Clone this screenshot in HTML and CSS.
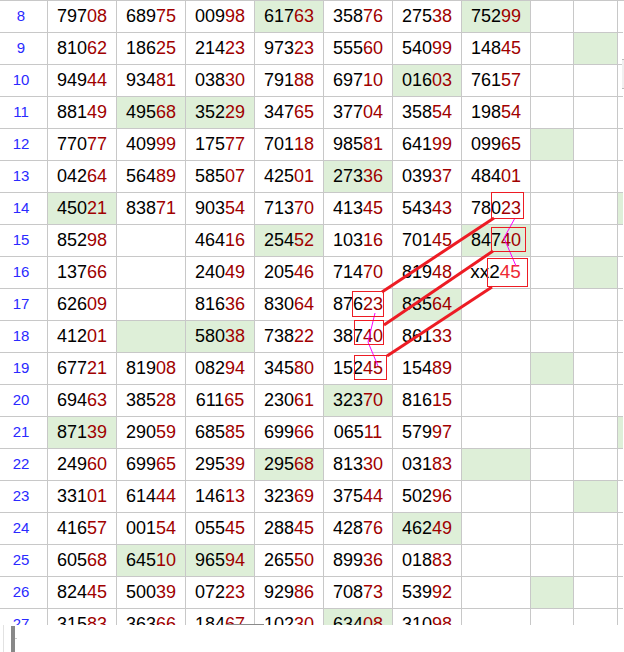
FILE: index.html
```html
<!DOCTYPE html>
<html lang="en">
<head>
<meta charset="utf-8">
<title>Number sheet</title>
<link rel="stylesheet" href="styles.css">
</head>
<body>
<div class="page">
<main class="sheet">
<div class="row"><div class="num">8</div><div class="cell">797<b>08</b></div><div class="cell">689<b>75</b></div><div class="cell">009<b>98</b></div><div class="cell g">617<b>63</b></div><div class="cell">358<b>76</b></div><div class="cell">275<b>38</b></div><div class="cell g">752<b>99</b></div><div class="cell"></div><div class="cell"></div><div class="end"></div></div>
<div class="row"><div class="num">9</div><div class="cell">810<b>62</b></div><div class="cell">186<b>25</b></div><div class="cell">214<b>23</b></div><div class="cell">973<b>23</b></div><div class="cell">555<b>60</b></div><div class="cell">540<b>99</b></div><div class="cell">148<b>45</b></div><div class="cell"></div><div class="cell g"></div><div class="end"></div></div>
<div class="row"><div class="num">10</div><div class="cell">949<b>44</b></div><div class="cell">934<b>81</b></div><div class="cell">038<b>30</b></div><div class="cell">791<b>88</b></div><div class="cell">697<b>10</b></div><div class="cell g">016<b>03</b></div><div class="cell">761<b>57</b></div><div class="cell"></div><div class="cell"></div><div class="end"></div></div>
<div class="row"><div class="num">11</div><div class="cell">881<b>49</b></div><div class="cell g">495<b>68</b></div><div class="cell g">352<b>29</b></div><div class="cell">347<b>65</b></div><div class="cell">377<b>04</b></div><div class="cell">358<b>54</b></div><div class="cell">198<b>54</b></div><div class="cell"></div><div class="cell"></div><div class="end"></div></div>
<div class="row"><div class="num">12</div><div class="cell">770<b>77</b></div><div class="cell">409<b>99</b></div><div class="cell">175<b>77</b></div><div class="cell">701<b>18</b></div><div class="cell">985<b>81</b></div><div class="cell">641<b>99</b></div><div class="cell">099<b>65</b></div><div class="cell g"></div><div class="cell"></div><div class="end"></div></div>
<div class="row"><div class="num">13</div><div class="cell">042<b>64</b></div><div class="cell">564<b>89</b></div><div class="cell">585<b>07</b></div><div class="cell">425<b>01</b></div><div class="cell g">273<b>36</b></div><div class="cell">039<b>37</b></div><div class="cell">484<b>01</b></div><div class="cell"></div><div class="cell"></div><div class="end"></div></div>
<div class="row"><div class="num">14</div><div class="cell g">450<b>21</b></div><div class="cell">838<b>71</b></div><div class="cell">903<b>54</b></div><div class="cell">713<b>70</b></div><div class="cell">413<b>45</b></div><div class="cell">543<b>43</b></div><div class="cell">780<b>23</b></div><div class="cell"></div><div class="cell"></div><div class="end g"></div></div>
<div class="row"><div class="num">15</div><div class="cell">852<b>98</b></div><div class="cell"></div><div class="cell">464<b>16</b></div><div class="cell g">254<b>52</b></div><div class="cell">103<b>16</b></div><div class="cell">701<b>45</b></div><div class="cell g">847<b>40</b></div><div class="cell"></div><div class="cell"></div><div class="end"></div></div>
<div class="row"><div class="num">16</div><div class="cell">137<b>66</b></div><div class="cell"></div><div class="cell">240<b>49</b></div><div class="cell">205<b>46</b></div><div class="cell">714<b>70</b></div><div class="cell">819<b>48</b></div><div class="cell big">xx2<b>45</b></div><div class="cell"></div><div class="cell g"></div><div class="end"></div></div>
<div class="row"><div class="num">17</div><div class="cell">626<b>09</b></div><div class="cell"></div><div class="cell">816<b>36</b></div><div class="cell">830<b>64</b></div><div class="cell">876<b>23</b></div><div class="cell g">835<b>64</b></div><div class="cell"></div><div class="cell"></div><div class="cell"></div><div class="end"></div></div>
<div class="row"><div class="num">18</div><div class="cell">412<b>01</b></div><div class="cell g"></div><div class="cell g">580<b>38</b></div><div class="cell">738<b>22</b></div><div class="cell">387<b>40</b></div><div class="cell">861<b>33</b></div><div class="cell"></div><div class="cell"></div><div class="cell"></div><div class="end"></div></div>
<div class="row"><div class="num">19</div><div class="cell">677<b>21</b></div><div class="cell">819<b>08</b></div><div class="cell">082<b>94</b></div><div class="cell">345<b>80</b></div><div class="cell">152<b>45</b></div><div class="cell">154<b>89</b></div><div class="cell"></div><div class="cell g"></div><div class="cell"></div><div class="end"></div></div>
<div class="row"><div class="num">20</div><div class="cell">694<b>63</b></div><div class="cell">385<b>28</b></div><div class="cell">611<b>65</b></div><div class="cell">230<b>61</b></div><div class="cell g">323<b>70</b></div><div class="cell">816<b>15</b></div><div class="cell"></div><div class="cell"></div><div class="cell"></div><div class="end"></div></div>
<div class="row"><div class="num">21</div><div class="cell g">871<b>39</b></div><div class="cell">290<b>59</b></div><div class="cell">685<b>85</b></div><div class="cell">699<b>66</b></div><div class="cell">065<b>11</b></div><div class="cell">579<b>97</b></div><div class="cell"></div><div class="cell"></div><div class="cell"></div><div class="end g"></div></div>
<div class="row"><div class="num">22</div><div class="cell">249<b>60</b></div><div class="cell">699<b>65</b></div><div class="cell">295<b>39</b></div><div class="cell g">295<b>68</b></div><div class="cell">813<b>30</b></div><div class="cell">031<b>83</b></div><div class="cell g"></div><div class="cell"></div><div class="cell"></div><div class="end"></div></div>
<div class="row"><div class="num">23</div><div class="cell">331<b>01</b></div><div class="cell">614<b>44</b></div><div class="cell">146<b>13</b></div><div class="cell">323<b>69</b></div><div class="cell">375<b>44</b></div><div class="cell">502<b>96</b></div><div class="cell"></div><div class="cell"></div><div class="cell g"></div><div class="end"></div></div>
<div class="row"><div class="num">24</div><div class="cell">416<b>57</b></div><div class="cell">001<b>54</b></div><div class="cell">055<b>45</b></div><div class="cell">288<b>45</b></div><div class="cell">428<b>76</b></div><div class="cell g">462<b>49</b></div><div class="cell"></div><div class="cell"></div><div class="cell"></div><div class="end"></div></div>
<div class="row"><div class="num">25</div><div class="cell">605<b>68</b></div><div class="cell g">645<b>10</b></div><div class="cell g">965<b>94</b></div><div class="cell">265<b>50</b></div><div class="cell">899<b>36</b></div><div class="cell">018<b>83</b></div><div class="cell"></div><div class="cell"></div><div class="cell"></div><div class="end"></div></div>
<div class="row"><div class="num">26</div><div class="cell">824<b>45</b></div><div class="cell">500<b>39</b></div><div class="cell">072<b>23</b></div><div class="cell">929<b>86</b></div><div class="cell">708<b>73</b></div><div class="cell">539<b>92</b></div><div class="cell"></div><div class="cell g"></div><div class="cell"></div><div class="end"></div></div>
<div class="row"><div class="num">27</div><div class="cell">315<b>83</b></div><div class="cell">363<b>66</b></div><div class="cell">184<b>67</b></div><div class="cell">102<b>30</b></div><div class="cell g">634<b>08</b></div><div class="cell">310<b>98</b></div><div class="cell"></div><div class="cell"></div><div class="cell"></div><div class="end"></div></div>
</main>
<footer class="bar">
<span class="faint"></span>
<span class="grip"></span>
<span class="tick"></span>
<span class="tab"></span>
</footer>
<span class="scroll-mark"></span>
<svg class="marks" width="624" height="652" viewBox="0 0 624 652" aria-hidden="true">
<g fill="none" stroke="#ff00ff" stroke-width="1">
<polyline points="515,218 504,238 516,266"/>
<polyline points="375,313 368,342 378,366"/>
</g>
<g fill="none" stroke="#ed1c24" stroke-width="1">
<rect x="491.5" y="192.5" width="32" height="26"/>
<rect x="491.5" y="227.5" width="34" height="24"/>
<rect x="487.5" y="258.5" width="40" height="28"/>
<rect x="352.5" y="291.5" width="31" height="25"/>
<rect x="354.5" y="320.5" width="29" height="24"/>
<rect x="354.5" y="355.5" width="32" height="24"/>
</g>
<g stroke="#ed1c24" stroke-width="3">
<line x1="494" y1="218" x2="382" y2="292"/>
<line x1="493" y1="251" x2="384" y2="325"/>
<line x1="492" y1="287" x2="387" y2="356"/>
</g>
</svg>
</div>
</body>
</html>
```
FILE: styles.css
```css
html, body {
  margin: 0;
  padding: 0;
  background: #fff;
}

.page {
  position: relative;
  width: 624px;
  height: 652px;
  overflow: hidden;
  font-family: "Liberation Sans", Arial, sans-serif;
}

.sheet {
  height: 625px;
  overflow: hidden;
  border-top: 1px solid #c8c8c8;
  box-sizing: border-box;
}

.row {
  display: grid;
  grid-template-columns: 48px repeat(7, 69px) 43px 44px 5px;
  height: 32px;
  box-sizing: border-box;
  width: 623px;
  border-bottom: 1px solid #c8c8c8;
}

.num,
.cell {
  display: flex;
  align-items: center;
  justify-content: center;
  border-right: 1px solid #c8c8c8;
  box-sizing: border-box;
  color: #000;
}

.num {
  color: #2a2aff;
  font-size: 15px;
  padding: 0 5px 2px 0;
}

.cell {
  font-size: 18px;
  padding-bottom: 1px;
  white-space: pre;
}

.cell b {
  font-weight: normal;
  color: #a00000;
}

.g {
  background: #deefd8;
}

.big {
  font-size: 19px;
  padding-right: 1px;
}

.big b {
  color: #ee2a35;
}

.bar {
  position: relative;
  display: flex;
  height: 27px;
  background: #fff;
}

.faint {
  width: 1px;
  margin-left: 3px;
  background: #e2e2e2;
}

.grip {
  width: 4px;
  margin-left: 7px;
  margin-top: 1px;
  background: #888;
}

.tick {
  align-self: flex-start;
  width: 2px;
  height: 1px;
  margin-top: 13px;
  background: #ccc;
}

.tab {
  position: absolute;
  left: 226px;
  top: -1px;
  width: 38px;
  height: 1px;
  background: #8a8a8a;
}

.scroll-mark {
  position: absolute;
  left: 622px;
  top: 59px;
  width: 2px;
  height: 30px;
  box-sizing: border-box;
  background: #f0f0f0;
  border-top: 1px solid #bbb;
  border-bottom: 1px solid #bbb;
}

.marks {
  position: absolute;
  left: 0;
  top: 0;
}
```
